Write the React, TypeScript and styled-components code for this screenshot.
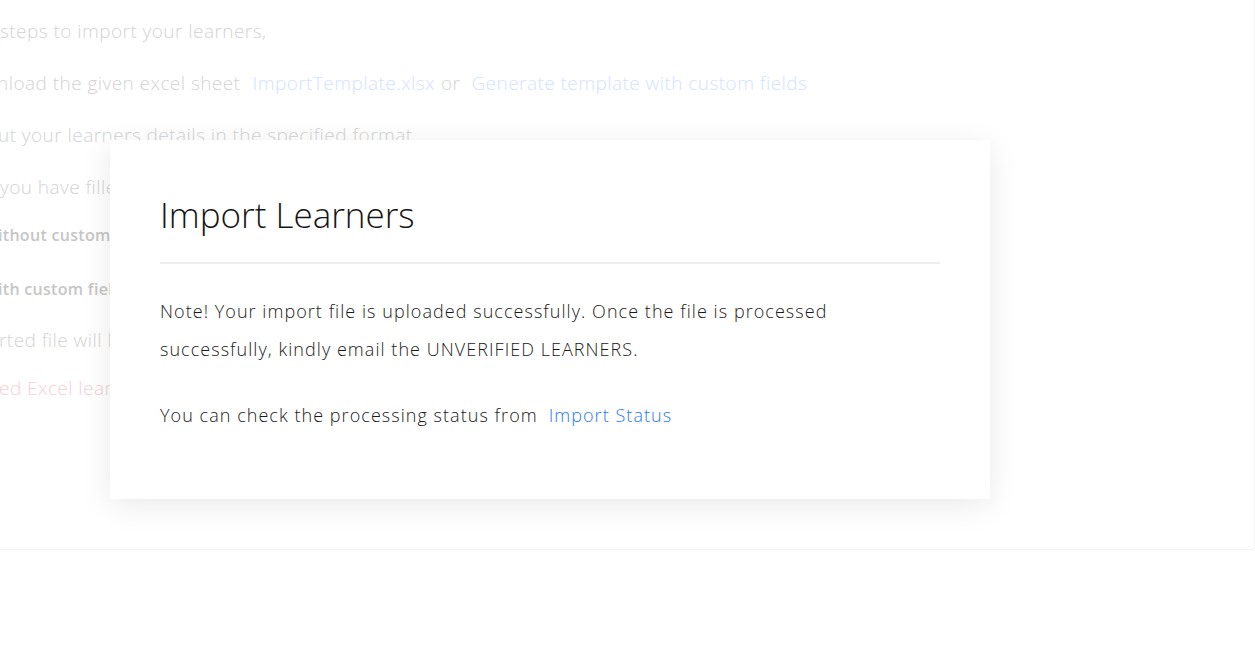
import React from "react";
import styled, { createGlobalStyle } from "styled-components";

const Global = createGlobalStyle`
  html, body {
    margin: 0;
    padding: 0;
    background: #ffffff;
    overflow: hidden;
  }
  body {
    font-family: "Open Sans", "Noto Sans", sans-serif;
  }
`;

const Page = styled.div`
  position: relative;
  width: 1255px;
  height: 662px;
  overflow: hidden;
  background: #ffffff;
`;

const Card = styled.div`
  width: 1255px;
  height: 550px;
  box-sizing: border-box;
  border-right: 1px solid #f3f3f3;
  border-bottom: 1px solid #f3f3f3;
  border-bottom-right-radius: 4px;
  padding-top: 17px;
  display: flex;
  flex-direction: column;
`;

const Line = styled.div<{ $gap: number; $shift?: number; $tone?: "muted" | "bold" | "pink" }>`
  margin-top: ${(p) => p.$gap}px;
  margin-left: ${(p) => -(p.$shift ?? 0)}px;
  white-space: nowrap;
  font-size: ${(p) => (p.$tone === "bold" ? "16px" : "19px")};
  font-weight: ${(p) => (p.$tone === "bold" ? 600 : 300)};
  letter-spacing: ${(p) => (p.$tone === "bold" ? "0.3px" : "0.45px")};
  line-height: 28px;
  color: ${(p) =>
    p.$tone === "bold" ? "#c6c6c6" : p.$tone === "pink" ? "#f6cfd8" : "#d3d3d3"};
`;

const FadedLink = styled.span<{ $space: number }>`
  color: #d3e2ff;
  margin-left: ${(p) => p.$space}px;
`;

const FadedOr = styled.span`
  margin-left: 6px;
`;

const Modal = styled.div`
  position: absolute;
  left: 110px;
  top: 140px;
  width: 880px;
  height: 359px;
  box-sizing: border-box;
  background: #ffffff;
  box-shadow: 0 6px 30px rgba(0, 0, 0, 0.09);
  padding: 52px 50px 0 50px;
  display: flex;
  flex-direction: column;
`;

const Title = styled.h2`
  margin: 0;
  font-size: 35px;
  font-weight: 300;
  line-height: 46px;
  color: #161616;
`;

const Divider = styled.hr`
  margin: 24px 0 0 0;
  border: none;
  height: 2px;
  background: #ededed;
`;

const Body = styled.p`
  margin: 28px 0 0 0;
  font-size: 18px;
  font-weight: 300;
  letter-spacing: 1.05px;
  line-height: 38px;
  color: #1a1a1a;
`;

const SecondBody = styled(Body)`
  margin-top: 28px;
`;

const StatusLink = styled.a`
  color: #2a78f5;
  text-decoration: none;
  margin-left: 11px;
`;

export default function App() {
  return (
    <>
      <Global />
      <Page>
        <Card>
          <Line $gap={0}>steps to import your learners,</Line>
          <Line $gap={24} $shift={3}>
            nload the given excel sheet
            <FadedLink $space={12}>ImportTemplate.xlsx</FadedLink>
            <FadedOr>or</FadedOr>
            <FadedLink $space={11}>Generate template with custom fields</FadedLink>
          </Line>
          <Line $gap={24} $shift={2}>ut your learners details in the specified format</Line>
          <Line $gap={24}>you have filled the details, upload the file</Line>
          <Line $gap={20} $shift={2} $tone="bold">ithout custom fields</Line>
          <Line $gap={26} $shift={2} $tone="bold">ith custom fields</Line>
          <Line $gap={23} $shift={1}>rted file will be processed in the background</Line>
          <Line $gap={20} $shift={1} $tone="pink">ed Excel learners will not be imported</Line>
        </Card>
        <Modal>
          <Title>Import Learners</Title>
          <Divider />
          <Body>
            Note! Your import file is uploaded successfully. Once the file is processed
            successfully, kindly email the UNVERIFIED LEARNERS.
          </Body>
          <SecondBody>
            You can check the processing status from
            <StatusLink href="#">Import Status</StatusLink>
          </SecondBody>
        </Modal>
      </Page>
    </>
  );
}
